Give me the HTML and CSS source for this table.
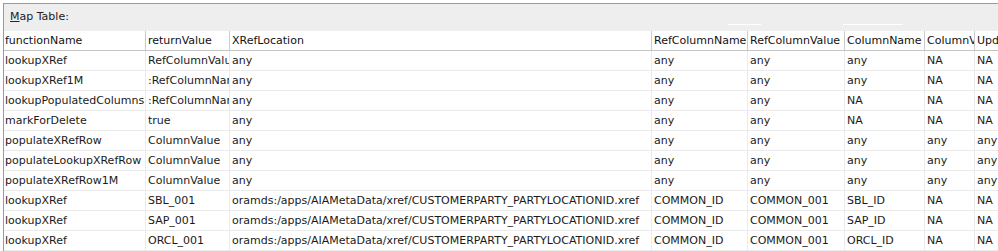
FILE: index.html
```html
<!DOCTYPE html>
<html>
<head>
<meta charset="utf-8">
<link rel="stylesheet" href="styles.css">
</head>
<body>
<div class="panel">
  <div class="caption"><span class="mn">M</span>ap Table:<span class="glint g1"></span><span class="glint g2"></span></div>
  <div class="table">
    <div class="row head">
      <div class="c c1">functionName</div><div class="c">returnValue</div><div class="c">XRefLocation</div><div class="c">RefColumnName</div><div class="c">RefColumnValue</div><div class="c">ColumnName</div><div class="c">ColumnValue</div><div class="c last">UpdateMode</div>
    </div>
    <div class="row">
      <div class="c c1">lookupXRef</div><div class="c">RefColumnValue</div><div class="c">any</div><div class="c">any</div><div class="c">any</div><div class="c">any</div><div class="c">NA</div><div class="c last">NA</div>
    </div>
    <div class="row">
      <div class="c c1">lookupXRef1M</div><div class="c">:RefColumnName</div><div class="c">any</div><div class="c">any</div><div class="c">any</div><div class="c">any</div><div class="c">NA</div><div class="c last">NA</div>
    </div>
    <div class="row">
      <div class="c c1">lookupPopulatedColumns</div><div class="c">:RefColumnName</div><div class="c">any</div><div class="c">any</div><div class="c">any</div><div class="c">NA</div><div class="c">NA</div><div class="c last">NA</div>
    </div>
    <div class="row">
      <div class="c c1">markForDelete</div><div class="c">true</div><div class="c">any</div><div class="c">any</div><div class="c">any</div><div class="c">NA</div><div class="c">NA</div><div class="c last">NA</div>
    </div>
    <div class="row">
      <div class="c c1">populateXRefRow</div><div class="c">ColumnValue</div><div class="c">any</div><div class="c">any</div><div class="c">any</div><div class="c">any</div><div class="c">any</div><div class="c last">any</div>
    </div>
    <div class="row">
      <div class="c c1">populateLookupXRefRow</div><div class="c">ColumnValue</div><div class="c">any</div><div class="c">any</div><div class="c">any</div><div class="c">any</div><div class="c">any</div><div class="c last">any</div>
    </div>
    <div class="row">
      <div class="c c1">populateXRefRow1M</div><div class="c">ColumnValue</div><div class="c">any</div><div class="c">any</div><div class="c">any</div><div class="c">any</div><div class="c">any</div><div class="c last">any</div>
    </div>
    <div class="row">
      <div class="c c1">lookupXRef</div><div class="c">SBL_001</div><div class="c">oramds:/apps/AIAMetaData/xref/CUSTOMERPARTY_PARTYLOCATIONID.xref</div><div class="c">COMMON_ID</div><div class="c">COMMON_001</div><div class="c">SBL_ID</div><div class="c">NA</div><div class="c last">NA</div>
    </div>
    <div class="row">
      <div class="c c1">lookupXRef</div><div class="c">SAP_001</div><div class="c">oramds:/apps/AIAMetaData/xref/CUSTOMERPARTY_PARTYLOCATIONID.xref</div><div class="c">COMMON_ID</div><div class="c">COMMON_001</div><div class="c">SAP_ID</div><div class="c">NA</div><div class="c last">NA</div>
    </div>
    <div class="row">
      <div class="c c1">lookupXRef</div><div class="c">ORCL_001</div><div class="c">oramds:/apps/AIAMetaData/xref/CUSTOMERPARTY_PARTYLOCATIONID.xref</div><div class="c">COMMON_ID</div><div class="c">COMMON_001</div><div class="c">ORCL_ID</div><div class="c">NA</div><div class="c last">NA</div>
    </div>
  </div>
</div>
</body>
</html>
```

FILE: styles.css
```css
html, body {
  margin: 0;
  padding: 0;
  background: #ffffff;
  overflow: hidden;
}
body {
  font-family: "DejaVu Sans", sans-serif;
  font-size: 11px;
  color: #1a1a1a;
  width: 998px;
  height: 251px;
}
.panel {
  margin: 3px 0 0 3px;
  border-top: 1px solid #9a9a9a;
  border-left: 1px solid #9a9a9a;
  height: 247px;
  overflow: hidden;
}
.caption {
  position: relative;
  height: 27px;
  background: #eeeeee;
  box-sizing: border-box;
  padding: 6px 0 0 6px;
  line-height: 14px;
  color: #222;
}
.mn {
  text-decoration: underline;
}
.glint {
  position: absolute;
  top: 20px;
  height: 1px;
  background: #ffffff;
}
.g1 { left: 724px; width: 33px; }
.g2 { left: 839px; width: 60px; }
.table {
  display: flex;
  flex-direction: column;
}
.row {
  display: grid;
  grid-template-columns: 142px 84px 422px 96px 97px 80px 50px 1fr;
  height: 20px;
  border-bottom: 1px solid #ebebeb;
  box-sizing: border-box;
}
.row.head {
  border-bottom: 1px solid #c4c4c4;
  background: #ffffff;
  color: #111;
}
.c {
  box-sizing: border-box;
  border-right: 1px solid #ebebeb;
  padding: 0 0 0 2px;
  white-space: nowrap;
  overflow: hidden;
  line-height: 19px;
}
.head .c {
  border-right-color: #cbcbcb;
}
.c1 {
  padding-left: 1px;
}
.c.last {
  border-right: none;
}
```
